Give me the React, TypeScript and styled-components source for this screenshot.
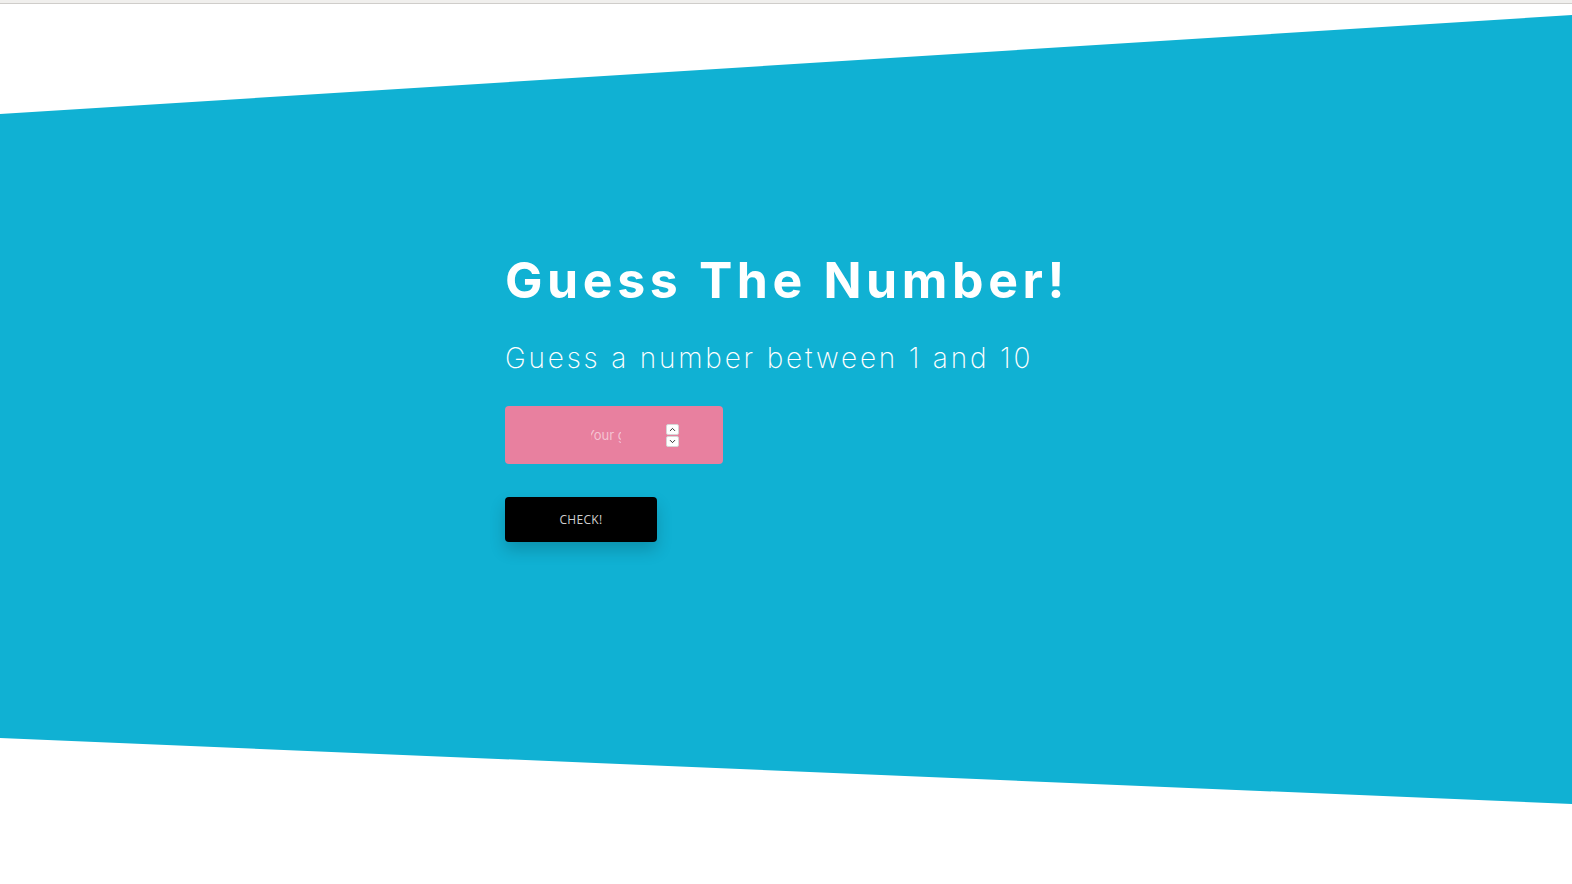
import { createGlobalStyle, styled } from 'styled-components'
import { ChevronUp, ChevronDown } from 'lucide-react'

const GlobalStyle = createGlobalStyle`
  body {
    margin: 0;
    background: #ffffff;
    font-family: Inter, "Noto Sans", sans-serif;
  }
`

const TopStrip = styled.div`
  height: 3px;
  background: #f0efed;
  border-bottom: 1px solid #cfcdca;
`

const Hero = styled.section`
  height: 800px;
  background: #10b1d3;
  clip-path: polygon(0 110px, 100% 11px, 100% 100%, 0 734px);
  display: flex;
  justify-content: center;
  padding-top: 246px;
  box-sizing: border-box;
`

const Content = styled.div`
  width: 562px;
  display: flex;
  flex-direction: column;
  align-items: flex-start;
`

const Title = styled.h1`
  margin: 0;
  color: #ffffff;
  font-size: 50px;
  line-height: 60px;
  font-weight: 700;
  letter-spacing: 4.6px;
  white-space: nowrap;
`

const Subtitle = styled.p`
  margin: 30px 0 0;
  color: #ffffff;
  font-size: 28px;
  line-height: 36px;
  font-weight: 200;
  letter-spacing: 2.8px;
  white-space: nowrap;
`

const Field = styled.label`
  margin-top: 30px;
  width: 218px;
  height: 58px;
  background: #e8809f;
  border-radius: 4px;
  display: flex;
  align-items: center;
  padding-left: 86px;
  box-sizing: border-box;
  gap: 45px;
`

const GuessInput = styled.input`
  width: 30px;
  border: none;
  outline: none;
  background: transparent;
  padding: 0;
  font-family: Inter, sans-serif;
  font-size: 13px;
  color: #ffffff;
  text-indent: -5px;
  -moz-appearance: textfield;

  &::placeholder {
    color: #f5c3d2;
  }

  &::-webkit-inner-spin-button,
  &::-webkit-outer-spin-button {
    -webkit-appearance: none;
    margin: 0;
  }
`

const Spinner = styled.span`
  display: flex;
  flex-direction: column;
  gap: 1px;
  margin-top: 1px;
`

const SpinStep = styled.span`
  width: 13px;
  height: 11px;
  background: #ffffff;
  border: 1px solid #d6d6d6;
  border-radius: 2px;
  box-sizing: border-box;
  display: flex;
  align-items: center;
  justify-content: center;
  color: #222;
`

const CheckButton = styled.button`
  margin-top: 33px;
  width: 152px;
  height: 45px;
  background: #000000;
  color: #cfcfcf;
  border: none;
  border-radius: 4px;
  font-family: "Open Sans", sans-serif;
  font-size: 12px;
  letter-spacing: 0.3px;
  cursor: pointer;
  box-shadow: 0 8px 16px rgba(0, 0, 0, 0.18);
`

function App() {
  return (
    <>
      <GlobalStyle />
      <TopStrip />
      <Hero>
        <Content>
          <Title>Guess The Number!</Title>
          <Subtitle>Guess a number between 1 and 10</Subtitle>
          <Field>
            <GuessInput type="number" min={1} max={10} placeholder="Your guess" />
            <Spinner>
              <SpinStep><ChevronUp size={9} strokeWidth={2.5} /></SpinStep>
              <SpinStep><ChevronDown size={9} strokeWidth={2.5} /></SpinStep>
            </Spinner>
          </Field>
          <CheckButton>CHECK!</CheckButton>
        </Content>
      </Hero>
    </>
  )
}

export default App
